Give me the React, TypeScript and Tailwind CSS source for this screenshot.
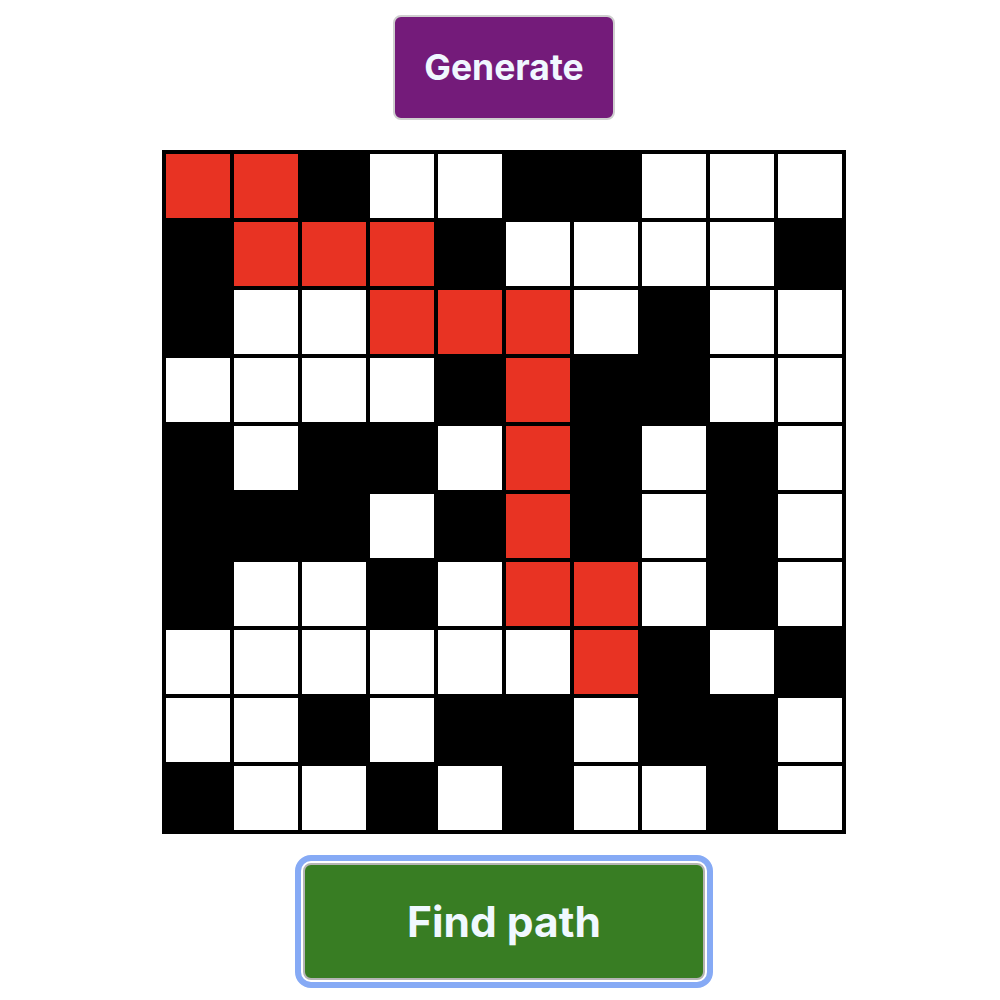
import React from "react";

const G = [
  "RRBWWBBWWW",
  "BRRRBWWWWB",
  "BWWRRRWBWW",
  "WWWWBRBBWW",
  "BWBBWRBWBW",
  "BBBWBRBWBW",
  "BWWBWRRWBW",
  "WWWWWWRBWB",
  "WWBWBBWBBW",
  "BWWBWBWWBW",
];

function cellClass(c: string) {
  if (c === "R") return "bg-[#e83323]";
  if (c === "B") return "bg-black";
  return "bg-white";
}

export default function App() {
  return (
    <div className="flex w-[1000px] h-[1000px] flex-col items-center bg-white pl-[8px] pt-[15px] font-['Inter',sans-serif]">
      <button className="flex h-[105px] w-[222px] items-center justify-center rounded-[8px] border-2 border-[#cfcfcf] bg-[#741b7a] text-[35.5px] font-bold text-[#f0f8ff]">
        Generate
      </button>
      <div className="mt-[30px] grid grid-cols-[repeat(10,64px)] gap-[4px] bg-black p-[4px]">
        {G.flatMap((row, r) =>
          row.split("").map((c, i) => (
            <div key={r + "-" + i} className={"h-[64px] w-[64px] " + cellClass(c)} />
          ))
        )}
      </div>
      <button className="mt-[29px] flex h-[117px] w-[402px] items-center justify-center rounded-[8px] border-2 border-[#b5b5b5] bg-[#387d23] text-[42.5px] font-bold text-[#f0f8ff] outline-[6px] outline-offset-2 outline-[#86aaf5] outline-solid">
        Find path
      </button>
    </div>
  );
}
